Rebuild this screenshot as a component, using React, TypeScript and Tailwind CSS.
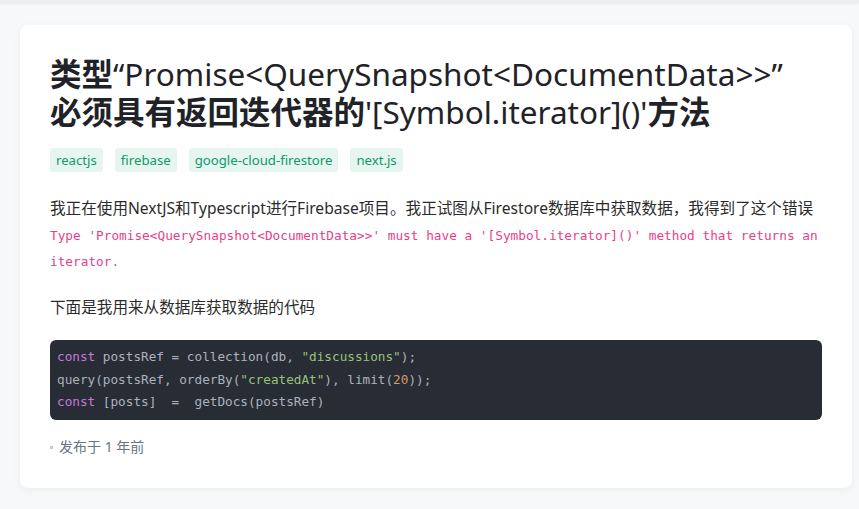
const tags = ["reactjs", "firebase", "google-cloud-firestore", "next.js"];

const mono = "font-['DejaVu_Sans_Mono','Liberation_Mono',monospace]";

const App = () => {
  return (
    <div className="min-h-[509px] bg-[#f7f8fa] font-['Noto_Sans','Noto_Sans_CJK_SC',sans-serif]">
      <div className="h-[3px] bg-[#eceef1] shadow-[0_1px_3px_rgba(0,0,0,0.06)]" />
      <div className="pl-[20px] pt-[22px] pb-[22px]">
        <div className="w-[832px] rounded-lg bg-white px-[30px] pt-[30px] pb-[31px] shadow-[0_2px_8px_rgba(0,0,0,0.05)]">
          <h1 className="text-[31.5px] leading-[38px] text-[#1f2328] font-normal">
            <span className="font-bold">类型</span>“Promise&lt;QuerySnapshot&lt;DocumentData&gt;&gt;”
            <br />
            <span className="font-bold">必须具有返回迭代器的</span>'[Symbol.iterator]()'
            <span className="font-bold">方法</span>
          </h1>

          <div className="mt-[17px] flex gap-[12px]">
            {tags.map((tag) => (
              <span
                key={tag}
                className="h-[24px] rounded-[3px] bg-[#e6f5ef] px-[6px] text-[13.2px] leading-[24px] text-[#0e9a6c]"
              >
                {tag}
              </span>
            ))}
          </div>

          <p className="mt-[23px] text-[15.6px] leading-[26px] text-[#2b2b2b]">
            我正在使用NextJS和Typescript进行Firebase项目。我正试图从Firestore数据库中获取数据，我得到了这个错误
            <br />
            <code className={`${mono} text-[12.75px] leading-none text-[#e83e8c]`}>
              Type 'Promise&lt;QuerySnapshot&lt;DocumentData&gt;&gt;' must have a '[Symbol.iterator]()' method that returns an iterator.
            </code>
          </p>

          <p className="mt-[21px] text-[15.6px] leading-[26px] text-[#2b2b2b]">
            下面是我用来从数据库获取数据的代码
          </p>

          <pre className={`${mono} mt-[20px] rounded-md bg-[#282c34] px-[7px] py-[6px] text-[12.7px] leading-[22.7px] text-[#abb2bf]`}>
            <span className="text-[#c678dd]">const</span> postsRef = collection(db, <span className="text-[#98c379]">"discussions"</span>);
            {"\n"}query(postsRef, orderBy(<span className="text-[#98c379]">"createdAt"</span>), limit(<span className="text-[#d19a66]">20</span>));
            {"\n"}<span className="text-[#c678dd]">const</span> [posts]  =  getDocs(postsRef)
          </pre>

          <div className="mt-[17px] flex items-center text-[14px] leading-[20px] text-[#6b7280]">
            <span className="mr-[6px] h-[3px] w-[3px] bg-[#c8ccd1]" />
            发布于 1 年前
          </div>
        </div>
      </div>
    </div>
  );
};

export default App;
